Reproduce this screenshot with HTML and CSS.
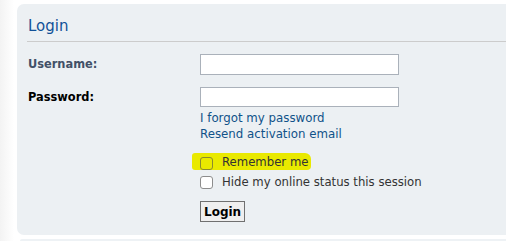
FILE: index.html
```html
<!DOCTYPE html>
<html lang="en">
<head>
    <meta charset="UTF-8">
    <title>Login</title>
    <link rel="stylesheet" href="styles.css">
</head>
<body>
    <div class="page">
        <div class="panel">
            <h2>Login</h2>
            <div class="form">
                <div class="row">
                    <label class="label user" for="username">Username:</label>
                    <div class="field">
                        <input type="text" id="username">
                    </div>
                </div>
                <div class="row row-pass">
                    <label class="label" for="password">Password:</label>
                    <div class="field">
                        <input type="password" id="password">
                        <a href="#">I forgot my password</a>
                        <a href="#">Resend activation email</a>
                    </div>
                </div>
                <div class="row row-opts">
                    <div class="label"></div>
                    <div class="field">
                        <label class="check marked"><input type="checkbox"> Remember me</label>
                        <label class="check"><input type="checkbox"> Hide my online status this session</label>
                        <button type="button">Login</button>
                    </div>
                </div>
            </div>
        </div>
        <div class="panel-next"></div>
    </div>
</body>
</html>
```

FILE: styles.css
```css
* {
    margin: 0;
    padding: 0;
    box-sizing: border-box;
}

body {
    background: linear-gradient(to right, #f3f3f3, #ffffff 14px);
    font-family: 'DejaVu Sans', Verdana, sans-serif;
    font-size: 12px;
    color: #333;
    overflow: hidden;
    height: 241px;
}

.page {
    padding: 4px 0 0 17px;
}

.panel {
    background: #ecf0f3;
    border-radius: 7px;
    margin-right: -20px;
    padding: 12px 0 0 10px;
    height: 231px;
}

h2 {
    font-size: 15px;
    font-weight: normal;
    color: #115098;
    line-height: 20px;
    padding-left: 1px;
    padding-bottom: 5px;
    border-bottom: 1px solid #cccccc;
}

.form {
    padding-top: 12px;
}

.row {
    display: flex;
}

.label {
    width: 173px;
    flex-shrink: 0;
    font-weight: bold;
    font-size: 11.4px;
    color: #425067;
    padding-top: 3px;
    padding-left: 1px;
}

.row-pass {
    margin-top: 12px;
}

.row-pass .label {
    color: #000;
}

.field {
    display: flex;
    flex-direction: column;
    align-items: flex-start;
}

input[type="text"],
input[type="password"] {
    width: 199px;
    height: 21px;
    border: 1px solid #aab1ba;
    background: #fff;
}

input[type="password"] {
    height: 20px;
    margin-bottom: 3px;
}

.field a {
    color: #105289;
    text-decoration: none;
    font-size: 11.8px;
    line-height: 16px;
}

.row-opts {
    margin-top: 11px;
}

.check {
    display: flex;
    align-items: center;
    gap: 9px;
    font-size: 11.7px;
    color: #333;
    line-height: 13px;
    height: 13px;
    margin-top: 6px;
}

.check.marked {
    align-items: flex-end;
    background: #e9e900;
    margin: 0 0 0 -8px;
    padding-left: 8px;
    padding-right: 3px;
    border-radius: 3px 6px 4px 3px;
    height: 17px;
    line-height: 15px;
}

.check input {
    appearance: none;
    width: 13px;
    height: 13px;
    border: 1px solid #8d8d8d;
    border-radius: 3px;
    background: #fff;
}

.check.marked input {
    background: #e9e900;
    border-color: #8a8a30;
}

button {
    margin-top: 12px;
    font-family: 'DejaVu Sans', Verdana, sans-serif;
    font-weight: bold;
    font-size: 12px;
    color: #000;
    background: #efefef;
    border: 1px solid #707070;
    height: 21px;
    padding: 0 3px;
}

.panel-next {
    margin: 4px -20px 0 3px;
    height: 2px;
    background: #eef2f5;
    border-radius: 7px 7px 0 0;
}
```
